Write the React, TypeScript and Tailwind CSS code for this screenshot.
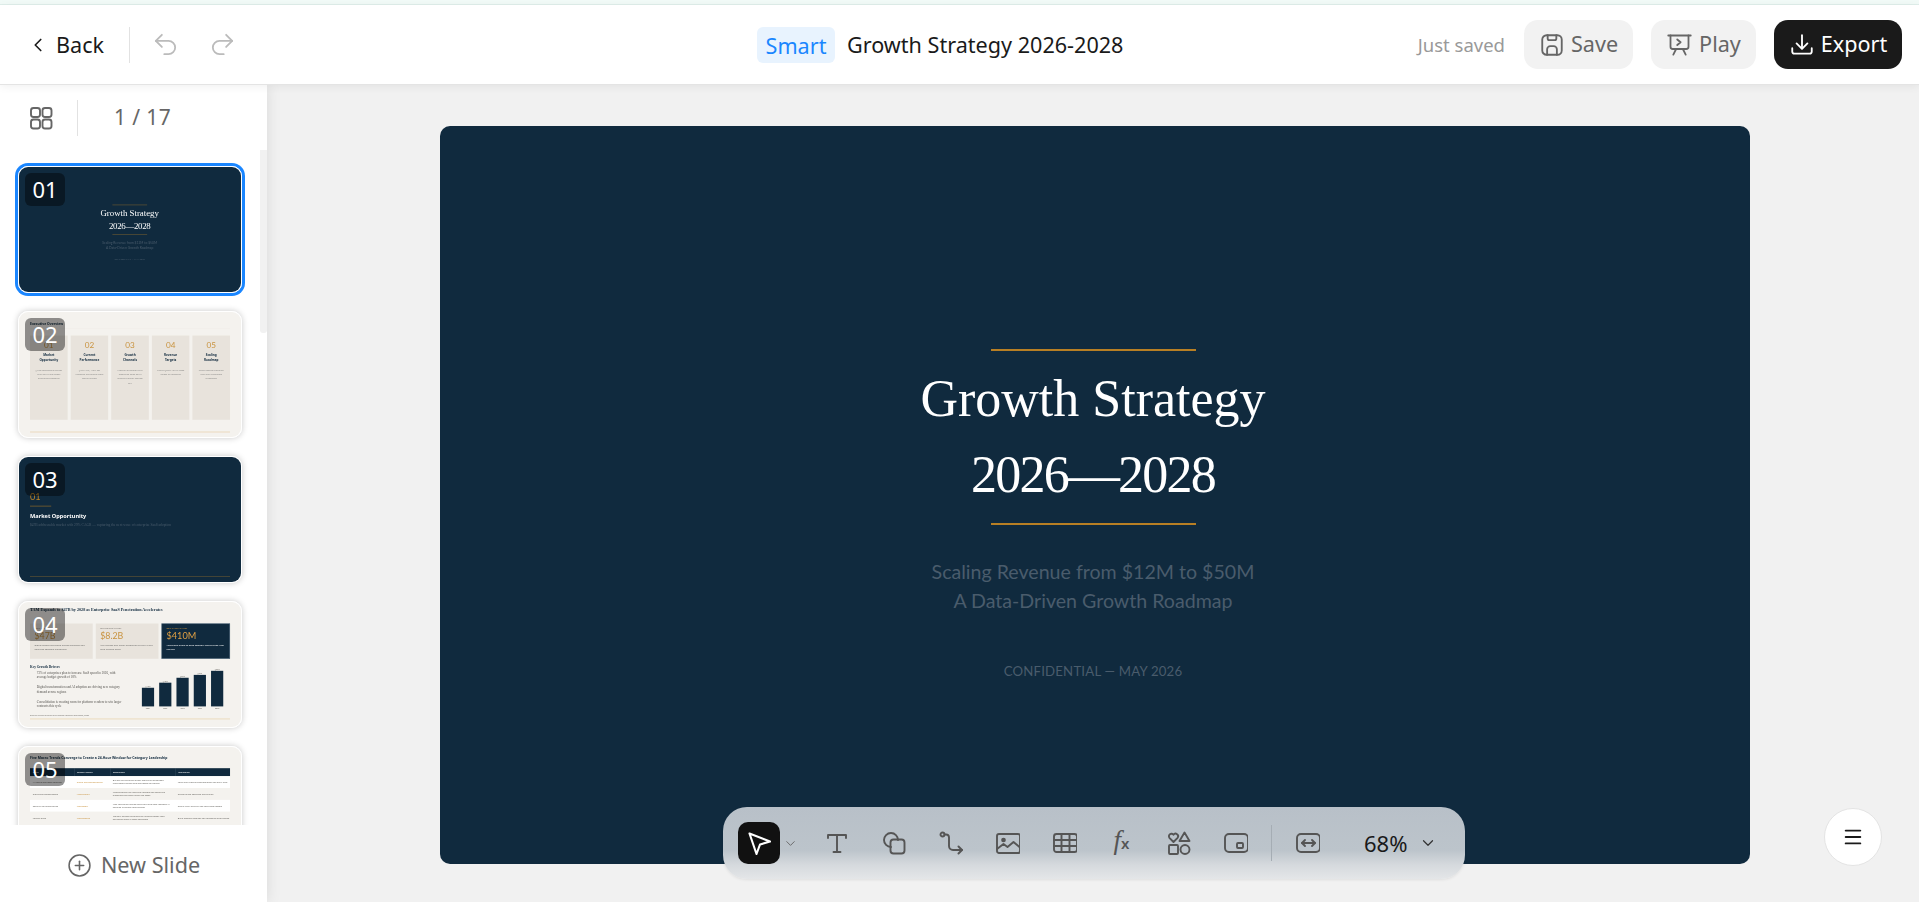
import type { ReactNode } from 'react'
import { ChevronDown, ChevronLeft, CirclePlus, Menu, Redo2, Undo2 } from 'lucide-react'

const ui = { fontFamily: '"Noto Sans", sans-serif' }
const serif = { fontFamily: '"Liberation Serif", serif' }
const lato = { fontFamily: 'Lato, sans-serif' }

function Icon({ children, size = 24, width = 1.9 }: { children: ReactNode; size?: number; width?: number }) {
  return (
    <svg
      width={size}
      height={size}
      viewBox="0 0 24 24"
      fill="none"
      stroke="currentColor"
      strokeWidth={width}
      strokeLinecap="round"
      strokeLinejoin="round"
    >
      {children}
    </svg>
  )
}

// Opening slide, used for the canvas and for thumbnail 01
function TitleSlide() {
  return (
    <div className="w-[1310px] h-[738px] bg-[#102a3e] flex flex-col items-center pt-[223px] pr-[4px]">
      <div className="w-[205px] h-[2px] bg-[#b87f24]" />
      <div className="mt-[10px] text-white text-[52px] leading-[76px] text-center" style={serif}>
        Growth Strategy
        <br />
        <span className="tracking-[-1.8px]">2026—2028</span>
      </div>
      <div className="mt-[10px] w-[205px] h-[2px] bg-[#b87f24]" />
      <div className="mt-[32px] text-[#4a5c6c] text-[19.6px] leading-[29px] text-center" style={lato}>
        Scaling Revenue from $12M to $50M
        <br />
        A Data-Driven Growth Roadmap
      </div>
      <div className="mt-[46px] text-[#4a5c6c] text-[13.2px] leading-[20px] tracking-[0.2px]" style={lato}>
        CONFIDENTIAL — MAY 2026
      </div>
    </div>
  )
}

const overview = [
  { n: '01', title: ['Market', 'Opportunity'], body: '$47B addressable market with 29% CAGR across enterprise segments' },
  { n: '02', title: ['Current', 'Performance'], body: '$12M ARR, 142% net retention and strong gross margin profile' },
  { n: '03', title: ['Growth', 'Channels'], body: 'Product-led motion plus enterprise sales and a growing partner channel mix' },
  { n: '04', title: ['Revenue', 'Targets'], body: 'Path to $50M ARR by 2028 across all segments' },
  { n: '05', title: ['Scaling', 'Roadmap'], body: 'Three phased execution plan with investment milestones' },
]

function OverviewSlide() {
  return (
    <div className="w-[1310px] h-[738px] bg-[#f4f2ee] flex flex-col px-[65px] pt-[50px] text-[#122b3f]" style={ui}>
      <div className="h-[35px] text-[20px] font-bold leading-[35px]">Executive Overview</div>
      <div className="mt-[10px] h-[2px] bg-[#ece9e3]" />
      <div className="mt-[42px] flex gap-[18px]">
        {overview.map((c) => (
          <div key={c.n} className="flex-1 h-[497px] bg-[#e8e3dc] px-[24px] pt-[28px] text-center">
            <div className="text-[48px] leading-[56px] text-[#c9933f]" style={lato}>
              {c.n}
            </div>
            <div className="mt-[14px] text-[18px] leading-[30px] font-bold">
              {c.title[0]}
              <br />
              {c.title[1]}
            </div>
            <div className="mt-[36px] text-[13px] leading-[24px] text-[#8a8a88]">{c.body}</div>
          </div>
        ))}
      </div>
      <div className="mt-[70px] h-[4px] bg-[#e8cfa8]" />
    </div>
  )
}

function SectionSlide() {
  return (
    <div className="w-[1310px] h-[738px] bg-[#102a3e] flex flex-col px-[65px] pt-[202px]" style={ui}>
      <div className="text-[54px] leading-[64px] text-[#c08525]" style={lato}>
        01
      </div>
      <div className="mt-[22px] w-[125px] h-[3px] bg-[#b87f24]" />
      <div className="mt-[32px] text-white text-[33px] leading-[44px] font-bold">Market Opportunity</div>
      <div className="mt-[20px] text-[#4a5c6c] text-[21px] leading-[28px]" style={serif}>
        $47B addressable market with 29% CAGR — capturing the next wave of enterprise SaaS adoption
      </div>
      <div className="mt-[289px] h-[4px] bg-[#5c5233]" />
    </div>
  )
}

const bars = [
  { h: 110, v: '$12M', y: '2024' },
  { h: 140, v: '$18M', y: '2025' },
  { h: 169, v: '$26M', y: '2026' },
  { h: 186, v: '$37M', y: '2027' },
  { h: 210, v: '$50M', y: '2028' },
]

function TamSlide() {
  return (
    <div className="w-[1310px] h-[738px] bg-[#f4f2ee] flex flex-col px-[65px] pt-[25px] text-[#122b3f]">
      <div className="text-[24.5px] leading-[40px] font-bold whitespace-nowrap" style={serif}>
        TAM Expands to $47B by 2028 as Enterprise SaaS Penetration Accelerates
      </div>
      <div className="mt-[62px] flex gap-[18px] h-[208px]" style={ui}>
        {[
          { l: 'TOTAL MARKET 2028', v: '$47B', d: 'Global enterprise spend across workflow and analytics software categories' },
          { l: 'SERVICEABLE MARKET', v: '$8.2B', d: 'Mid-market and upper enterprise buyers in our core regions today' },
        ].map((c) => (
          <div key={c.v} className="w-[370px] bg-[#e8e3dc] px-[26px] pt-[22px]">
            <div className="text-[12px] leading-[16px] text-[#77746f]">{c.l}</div>
            <div className="text-[52px] leading-[62px] text-[#c9933f]" style={lato}>
              {c.v}
            </div>
            <div className="mt-[12px] text-[14px] leading-[26px] text-[#6c6c6a]">{c.d}</div>
          </div>
        ))}
        <div className="flex-1 bg-[#102a3e] border-[3px] border-[#6f8494] px-[26px] pt-[19px]">
          <div className="text-[12px] leading-[16px] text-[#c9933f]">OBTAINABLE MARKET</div>
          <div className="text-[54px] leading-[62px] text-[#e0a044]" style={lato}>
            $410M
          </div>
          <div className="mt-[12px] text-[14px] leading-[26px] text-white">
            Achievable share of SaaS category within three-year horizon
          </div>
        </div>
      </div>
      <div className="mt-[30px] flex h-[273px]">
        <div className="w-[600px]">
          <div className="text-[20px] leading-[30px] font-bold" style={serif}>
            Key Growth Drivers
          </div>
          <div className="mt-[8px] pl-[40px] pr-[40px] text-[#55534f] text-[19px] leading-[26px]" style={serif}>
            <p>72% of enterprises plan to increase SaaS spend in 2026, with average budget growth of 18%</p>
            <p className="mt-[34px]">Digital transformation and AI adoption are driving new category demand across regions</p>
            <p className="mt-[34px]">Consolidation is creating room for platform vendors to win larger contracts this cycle</p>
          </div>
        </div>
        <div className="flex-1 flex items-end justify-end gap-[30px] pr-[40px]">
          {bars.map((b) => (
            <div key={b.y} className="flex flex-col items-center text-[11px] leading-[16px] text-[#66645f]" style={ui}>
              <div>{b.v}</div>
              <div className="w-[72px] bg-[#102a3e]" style={{ height: b.h }} />
              <div className="mt-[6px]">{b.y}</div>
            </div>
          ))}
        </div>
      </div>
      <div className="mt-[24px] text-[12px] leading-[16px] text-[#77746f]" style={ui}>
        Source: market analysis and internal research estimates, 2026
      </div>
      <div className="mt-[10px] h-[4px] bg-[#e8cfa8]" />
    </div>
  )
}

const trends = [
  { a: 'AI-native workflow adoption', b: 'Rising and compounding', c: 'Buyers are replacing legacy tools with embedded intelligence across core workflows and teams', d: 'Lead with product differentiation and early wins' },
  { a: 'Cloud cost consolidation', b: 'Accelerating', c: 'Finance teams are merging vendors and favouring platforms that cover more use cases', d: 'Expand suite coverage and pricing' },
  { a: 'Security and compliance', b: 'Mandatory', c: 'New regulation makes audit trails and data residency a baseline purchase requirement', d: 'Certify early and sell into regulated sectors' },
  { a: 'Vertical SaaS', b: 'Fragmenting', c: 'Industry specific solutions are growing faster than horizontal tools in most segments', d: 'Build focused modules for healthcare and finance' },
]

function TrendsSlide() {
  return (
    <div className="w-[1310px] h-[738px] bg-[#f4f2ee] flex flex-col px-[65px] pt-[45px] text-[#122b3f]" style={ui}>
      <div className="text-[20px] leading-[40px] font-bold whitespace-nowrap">
        Five Macro Trends Converge to Create a 24-Hour Window for Category Leadership
      </div>
      <div className="mt-[40px] flex h-[47px] bg-[#102a3e] text-white text-[13px] leading-[47px]">
        <div className="w-[260px] pl-[16px]">Trend</div>
        <div className="w-[212px] pl-[16px] border-l border-[#6f8494]">Growth Impact</div>
        <div className="w-[384px] pl-[16px] border-l border-[#6f8494]">Description</div>
        <div className="flex-1 pl-[16px] border-l border-[#6f8494]">Implication</div>
      </div>
      {trends.map((t, i) => (
        <div
          key={t.a}
          className={`flex items-center h-[70px] text-[13px] leading-[19px] text-[#66645f] ${i % 2 === 0 ? 'bg-white' : 'bg-[#f4f2ee]'}`}
        >
          <div className="w-[260px] pl-[16px]">{t.a}</div>
          <div className="w-[212px] pl-[16px] text-[#c9933f]">{t.b}</div>
          <div className="w-[384px] pl-[16px] pr-[10px]">{t.c}</div>
          <div className="flex-1 pl-[16px]">{t.d}</div>
        </div>
      ))}
    </div>
  )
}

const slides = [
  { n: '01', el: <TitleSlide /> },
  { n: '02', el: <OverviewSlide /> },
  { n: '03', el: <SectionSlide /> },
  { n: '04', el: <TamSlide /> },
  { n: '05', el: <TrendsSlide /> },
]

function Thumb({ n, active, children }: { n: string; active?: boolean; children: ReactNode }) {
  return (
    <div
      className={`relative shrink-0 w-[224px] h-[127px] rounded-[10px] border border-white overflow-hidden ${
        active ? 'ring-[3px] ring-[#1a86ff]' : 'shadow-[0_0_6px_rgba(0,0,0,0.22)]'
      }`}
    >
      <div className="w-[1310px] h-[738px] origin-top-left scale-[0.1695] blur-[1px]">{children}</div>
      <div
        className="absolute left-[6px] top-[6px] w-[40px] h-[33px] rounded-[6px] bg-[rgba(0,0,0,0.42)] text-white text-[22px] leading-[33px] text-center"
        style={ui}
      >
        {n}
      </div>
    </div>
  )
}

function Sidebar() {
  return (
    <aside className="relative z-10 w-[267px] shrink-0 bg-white flex flex-col shadow-[0_0_14px_rgba(0,0,0,0.1)]">
      <div className="h-[65px] shrink-0 flex items-center pl-[29px]">
        <span className="text-[#666]">
          <Icon>
            <rect x="2" y="2" width="9" height="9" rx="2.5" />
            <rect x="13.5" y="2" width="9" height="9" rx="2.5" />
            <rect x="2" y="13.5" width="9" height="9" rx="2.5" />
            <rect x="13.5" y="13.5" width="9" height="9" rx="2.5" />
          </Icon>
        </span>
        <div className="ml-[24px] w-px h-[36px] bg-[#e2e2e2]" />
        <div className="ml-[36px] text-[21px] text-[#666] tracking-[0.4px]">1 / 17</div>
      </div>
      <div className="relative flex-1 min-h-0 overflow-hidden flex flex-col items-start gap-[18px] pl-[18px] pt-[16px]">
        {slides.map((s, i) => (
          <Thumb key={s.n} n={s.n} active={i === 0}>
            {s.el}
          </Thumb>
        ))}
        <div className="absolute right-0 top-0 w-[7px] h-[183px] bg-[#f1f1f1] rounded-b-[3px]" />
      </div>
      <div className="h-[77px] shrink-0 bg-white flex items-center justify-center gap-[9px] pt-[4px] text-[#666]">
        <CirclePlus size={25} strokeWidth={1.5} />
        <span className="text-[21.6px]">New Slide</span>
      </div>
    </aside>
  )
}

function Header() {
  return (
    <header className="relative z-20 h-[80px] shrink-0 bg-white border-b border-[#e4e4e4] flex items-center shadow-[0_2px_8px_rgba(0,0,0,0.06)]">
      <div className="w-[757px] shrink-0 flex items-center pl-[27px]">
        <ChevronLeft size={22} strokeWidth={1.8} className="text-[#1a1a1a]" />
        <span className="ml-[7px] pt-[2px] text-[21.6px] text-[#1a1a1a]">Back</span>
        <div className="ml-[25px] w-px h-[36px] bg-[#e2e2e2]" />
        <Undo2 size={29} strokeWidth={1.5} className="ml-[21px] text-[#bbb]" />
        <Redo2 size={29} strokeWidth={1.5} className="ml-[28px] text-[#bbb]" />
      </div>
      <div className="h-[36px] w-[78px] rounded-[6px] bg-[#e8f3fe] text-[#1a86ff] text-[21.6px] leading-[37px] text-center">
        Smart
      </div>
      <div className="ml-[12px] pt-[2px] text-[21.6px] text-[#1a1a1a]">Growth Strategy 2026-2028</div>
      <div className="ml-auto flex items-center pr-[17px]">
        <span className="text-[18.5px] text-[#999]">Just saved</span>
        <button className="ml-[19px] h-[49px] w-[109px] rounded-[14px] bg-[#f2f2f2] text-[#666] flex items-center justify-center gap-[6px] text-[21.6px]">
          <Icon size={26} width={1.7}>
            <rect x="3" y="3" width="18" height="18" rx="4" />
            <path d="M8 3v3a1.5 1.5 0 0 0 1.5 1.5h5A1.5 1.5 0 0 0 16 6V3" />
            <path d="M7.5 21v-5a3 3 0 0 1 3-3h3a3 3 0 0 1 3 3v5" />
          </Icon>
          Save
        </button>
        <button className="ml-[18px] h-[49px] w-[105px] rounded-[14px] bg-[#f2f2f2] text-[#666] flex items-center justify-center gap-[6px] text-[21.6px]">
          <Icon size={27} width={1.6}>
            <path d="M2 4h20" />
            <path d="M4 4v10a2 2 0 0 0 2 2h12a2 2 0 0 0 2-2V4" />
            <path d="M10 7.5l3 2.5-3 2.5" />
            <path d="M9 16l-2.5 5M15 16l2.5 5" />
          </Icon>
          Play
        </button>
        <button className="ml-[18px] h-[49px] w-[128px] rounded-[14px] bg-[#1a1a1a] text-white flex items-center justify-center gap-[6px] text-[21.6px]">
          <Icon size={26} width={1.7}>
            <path d="M12 3v12" />
            <path d="M7 10.5l5 5 5-5" />
            <path d="M3 15v3a2 2 0 0 0 2 2h14a2 2 0 0 0 2-2v-3" />
          </Icon>
          Export
        </button>
      </div>
    </header>
  )
}

function ToolButton({ children }: { children: ReactNode }) {
  return <div className="w-[57px] flex justify-center text-[#555]">{children}</div>
}

function Toolbar() {
  return (
    <div className="absolute left-[456px] top-[722px] w-[742px] h-[72px] rounded-[24px] flex items-center pl-[15px] shadow-[0_1px_3px_rgba(0,0,0,0.08)] bg-[linear-gradient(180deg,#b8c0c8_0%,#bcc4cb_60%,#d5d9dd_80%,#e4e6e8_100%)]">
      <div className="w-[42px] h-[42px] rounded-[10px] bg-[#111] flex items-center justify-center text-white">
        <Icon width={2.1}>
          <path d="M2.5 2.5L23 10.5 13 13.5 9.5 23Z" />
        </Icon>
      </div>
      <ChevronDown size={15} strokeWidth={1.5} className="ml-[3px] text-[#666]" />
      <div className="ml-[10px] flex items-center">
        <ToolButton>
          <Icon>
            <path d="M3 7V4h18v3" />
            <path d="M12 4v17" />
            <path d="M8.5 21h7" />
          </Icon>
        </ToolButton>
        <ToolButton>
          <Icon>
            <path d="M9 16A7 7 0 1 1 16 9" />
            <rect x="8.5" y="8.5" width="14" height="14" rx="3" />
          </Icon>
        </ToolButton>
        <ToolButton>
          <Icon>
            <circle cx="3.5" cy="3.5" r="2" />
            <path d="M5.5 3.5H7a3 3 0 0 1 3 3V15a4 4 0 0 0 4 4h9" />
            <path d="M19.5 15.5L23 19l-3.5 3.5" />
          </Icon>
        </ToolButton>
        <ToolButton>
          <Icon>
            <rect x="1" y="3" width="23" height="19" rx="2" />
            <circle cx="7.5" cy="9" r="1.4" fill="currentColor" />
            <path d="M1 18l6.5-5 4 3 6-5 6.5 5.5" />
          </Icon>
        </ToolButton>
        <ToolButton>
          <Icon>
            <rect x="1" y="3" width="23" height="18" rx="2.5" />
            <path d="M1 9h23M1 15h23M8.5 3v18M16.5 3v18" />
          </Icon>
        </ToolButton>
        <ToolButton>
          <span className="text-[27px] leading-[24px] italic" style={serif}>
            f
          </span>
          <span className="text-[15px] leading-[30px] font-semibold" style={ui}>
            x
          </span>
        </ToolButton>
        <ToolButton>
          <Icon>
            <path d="M6.5 11L2.4 6.8a2.5 2.5 0 0 1 4.1-3 2.5 2.5 0 0 1 4.1 3Z" />
            <path d="M17.5 1.5l5 8.5h-10Z" />
            <rect x="2" y="14" width="9" height="9" rx="1" />
            <circle cx="18" cy="18.5" r="4.5" />
          </Icon>
        </ToolButton>
        <ToolButton>
          <Icon>
            <rect x="1" y="3" width="23" height="18" rx="4" />
            <rect x="13" y="12" width="6" height="5" rx="1" />
          </Icon>
        </ToolButton>
        <div className="ml-[7px] w-px h-[36px] bg-[#a5adb4]" />
        <div className="ml-[7px]">
          <ToolButton>
            <Icon>
              <rect x="1" y="3" width="23" height="18" rx="4" />
              <path d="M6 12h13" />
              <path d="M9 9l-3 3 3 3M16 9l3 3-3 3" />
            </Icon>
          </ToolButton>
        </div>
        <span className="ml-[28px] text-[22px] text-[#1a1a1a]">68%</span>
        <ChevronDown size={18} strokeWidth={1.6} className="ml-[12px] text-[#333]" />
      </div>
    </div>
  )
}

export default function App() {
  return (
    <div className="w-[1919px] h-[902px] overflow-hidden flex flex-col bg-[#f1f1f1]" style={ui}>
      <div className="h-[5px] shrink-0 bg-[#f1faf7] border-b border-[#dfeeea]" />
      <Header />
      <div className="flex-1 min-h-0 flex">
        <Sidebar />
        <main className="relative flex-1 min-w-0 pl-[173px] pt-[41px]">
          <div className="w-[1310px] h-[738px] rounded-[10px] overflow-hidden">
            <TitleSlide />
          </div>
          <Toolbar />
          <button className="absolute left-[1557px] top-[723px] w-[58px] h-[58px] rounded-full bg-white border border-[#e4e4e4] flex items-center justify-center text-[#1a1a1a]">
            <Menu size={22} strokeWidth={2} />
          </button>
        </main>
      </div>
    </div>
  )
}
